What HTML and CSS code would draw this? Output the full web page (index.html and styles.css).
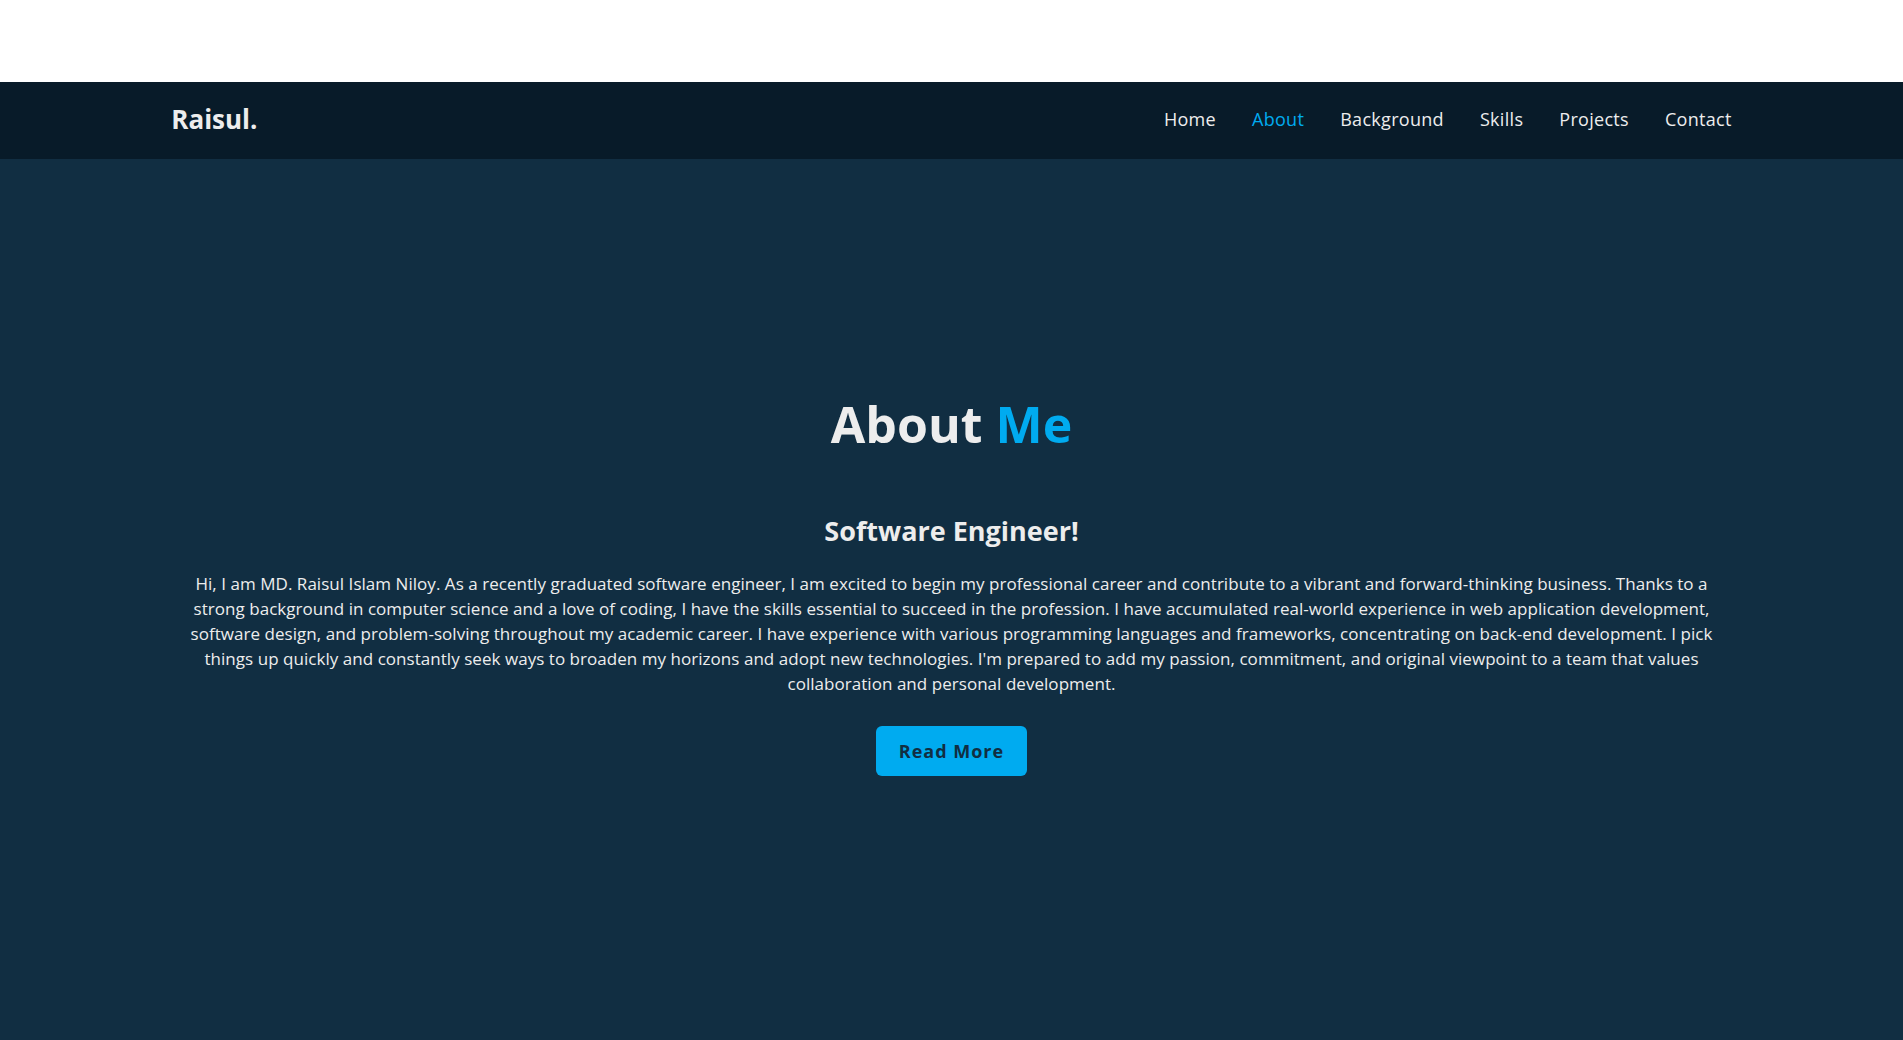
FILE: index.html
```html
<!DOCTYPE html>
<html lang="en">
<head>
<meta charset="utf-8">
<title>Raisul - About</title>
<link rel="stylesheet" href="styles.css">
</head>
<body>
<div class="top-space"></div>
<header class="header">
  <a href="#" class="logo">Raisul.</a>
  <nav class="navbar">
    <a href="#">Home</a>
    <a href="#" class="active">About</a>
    <a href="#">Background</a>
    <a href="#">Skills</a>
    <a href="#">Projects</a>
    <a href="#">Contact</a>
  </nav>
</header>
<section class="about">
  <h2 class="heading">About <span>Me</span></h2>
  <div class="about-content">
    <h3>Software Engineer!</h3>
    <p>Hi, I am MD. Raisul Islam Niloy. As a recently graduated software engineer, I am excited to begin my professional career and contribute to a vibrant and forward-thinking business. Thanks to a strong background in computer science and a love of coding, I have the skills essential to succeed in the profession. I have accumulated real-world experience in web application development, software design, and problem-solving throughout my academic career. I have experience with various programming languages and frameworks, concentrating on back-end development. I pick things up quickly and constantly seek ways to broaden my horizons and adopt new technologies. I'm prepared to add my passion, commitment, and original viewpoint to a team that values collaboration and personal development.</p>
    <a href="#" class="btn">Read More</a>
  </div>
</section>
</body>
</html>
```
FILE: styles.css
```css
* {
  margin: 0;
  padding: 0;
  box-sizing: border-box;
}
html, body {
  height: 100%;
}
body {
  font-family: "Open Sans", "DejaVu Sans", sans-serif;
  background: #ffffff;
  color: #ededed;
  display: flex;
  flex-direction: column;
}
a {
  text-decoration: none;
}
.top-space {
  height: 82px;
  flex: none;
}
.header {
  flex: none;
  height: 77px;
  background: #081b29;
  padding: 0 9% 3px;
  display: flex;
  align-items: center;
  justify-content: space-between;
}
.logo {
  font-size: 26px;
  font-weight: 700;
  color: #ededed;
}
.navbar {
  display: flex;
  gap: 36px;
}
.navbar a {
  font-size: 18px;
  font-weight: 500;
  letter-spacing: 0.3px;
  color: #ededed;
}
.navbar a.active {
  color: #00abf0;
}
.about {
  flex: 1;
  background: #112e42;
  padding: 235px 9% 0;
  display: flex;
  flex-direction: column;
  align-items: center;
  text-align: center;
}
.heading {
  font-size: 50px;
  line-height: 60px;
  font-weight: 700;
  color: #ededed;
}
.heading span {
  color: #00abf0;
}
.about-content {
  display: flex;
  flex-direction: column;
  align-items: center;
  margin-top: 61px;
}
.about-content h3 {
  font-size: 27px;
  line-height: 31px;
  font-weight: 700;
}
.about-content p {
  font-size: 17px;
  line-height: 25px;
  letter-spacing: 0.04px;
  margin: 25px 0 30px;
}
.btn {
  display: inline-flex;
  align-items: center;
  justify-content: center;
  width: 151px;
  height: 50px;
  background: #00abf0;
  border-radius: 6px;
  color: #112e42;
  font-size: 18px;
  font-weight: 700;
  letter-spacing: 1px;
}
```
